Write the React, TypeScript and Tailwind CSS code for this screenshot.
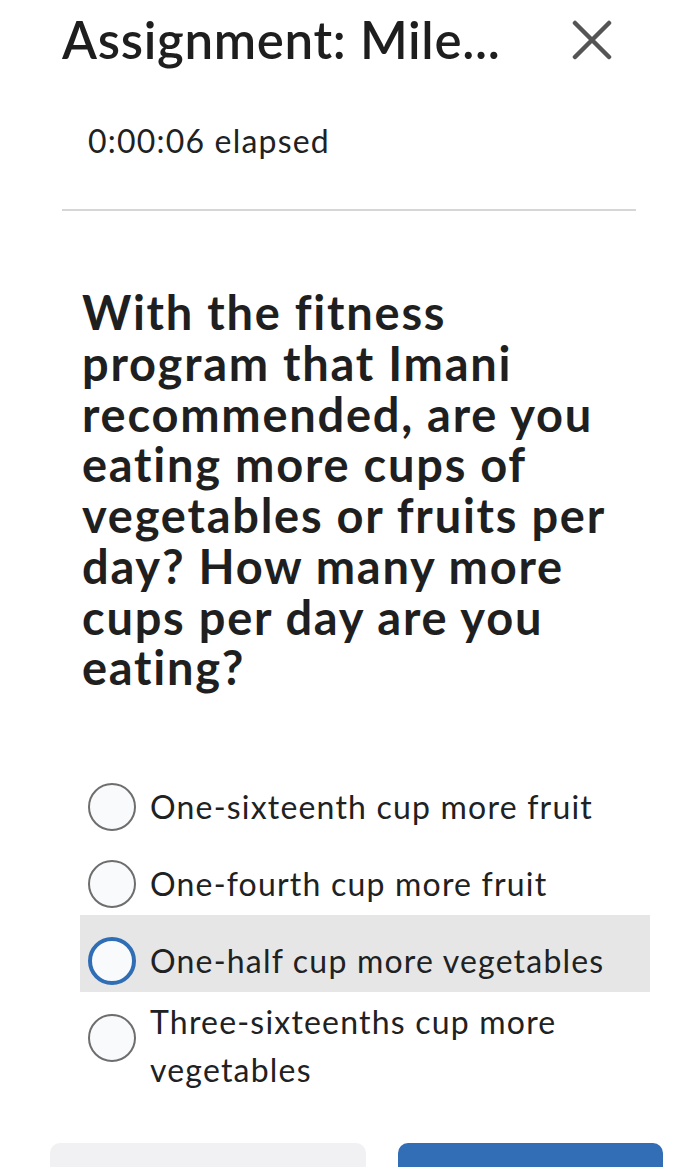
import { useState } from "react";

const options = [
  { label: "One-sixteenth cup more fruit", wrap: false },
  { label: "One-fourth cup more fruit", wrap: false },
  { label: "One-half cup more vegetables", wrap: false },
  { label: "Three-sixteenths cup more vegetables", wrap: true },
];

export default function App() {
  const [selected, setSelected] = useState(2);

  return (
    <div
      className="min-h-[1167px] w-full bg-white text-[#202122] [font-variant-ligatures:none]"
      style={{ fontFamily: "Lato, 'Noto Sans', sans-serif" }}
    >
      <div className="flex items-center justify-between pl-[62px] pr-[84px] pt-[10px]">
        <h1 className="text-[51px] font-semibold leading-[60px] tracking-[0.7px] text-[#1e1e1e]">Assignment: Mile...</h1>
        <button className="flex h-[44px] w-[44px] items-center justify-center">
          <svg width="40" height="40" viewBox="0 0 40 40" fill="none" stroke="#555" strokeWidth="4.5" strokeLinecap="round">
            <path d="M3 3L37 37M37 3L3 37" />
          </svg>
        </button>
      </div>

      <p className="mt-[51px] pl-[88px] text-[32px] leading-[40px] tracking-[1.2px]">0:00:06 elapsed</p>

      <div className="mx-[62px] mt-[48px] border-t-2 border-[#d6d6d6]" />

      <h2 className="mt-[76px] max-w-[640px] pl-[82px] text-[47px] font-bold leading-[50.75px] tracking-[1.75px] text-[#1f1f1f]">
        With the fitness program that Imani recommended, are you eating more cups of vegetables or fruits per day? How many more cups per day are you eating?
      </h2>

      <div className="ml-[80px] mr-[48px] mt-[68px] flex flex-col">
        {options.map((opt, i) => (
          <button
            key={opt.label}
            onClick={() => setSelected(i)}
            className={`flex gap-[14px] px-[8px] text-left ${opt.wrap ? "items-start pt-[6px]" : "items-center pt-[22px] pb-[7px]"} ${selected === i ? "bg-[#e6e6e6]" : ""}`}
          >
            <span
              className={`h-[48px] w-[48px] shrink-0 rounded-full bg-[#f9fafc] ${opt.wrap ? "mt-[16px]" : ""} ${selected === i ? "border-4 border-[#2f6db5]" : "border-2 border-[#6e6e6e]"}`}
            />
            <span className="text-[32px] leading-[48px] tracking-[1.2px]">{opt.label}</span>
          </button>
        ))}
      </div>

      <div className="mt-[49px] flex gap-[32px] pl-[50px] pr-[35px]">
        <button className="h-[60px] w-[316px] rounded-[10px] bg-[#f1f1f4]" />
        <button className="h-[60px] flex-1 rounded-[10px] bg-[#326eb5]" />
      </div>
    </div>
  );
}
